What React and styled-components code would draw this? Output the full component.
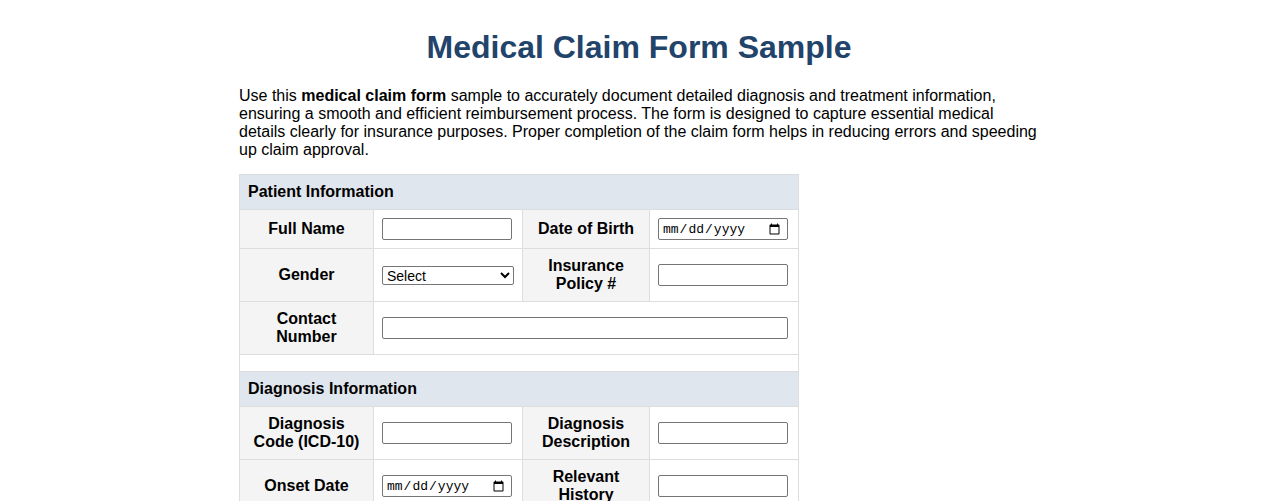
import React from 'react'
import styled, { createGlobalStyle } from 'styled-components'

const GlobalStyle = createGlobalStyle`
body {
    margin: 8px;
    background: #ffffff;
    font-family: "Liberation Sans", Arial, sans-serif;
    color: #000000;
}
`

const Page = styled.div`
max-width: 800px;
margin: 0 auto;
`

const Title = styled.h1`
margin: 21px 0;
text-align: center;
font-size: 32px;
font-weight: 700;
color: #22446b;
`

const Intro = styled.p`
margin: 0 0 15px;
font-size: 16px;
line-height: 18px;
`

const Table = styled.table`
width: 559px;
border-collapse: collapse;
table-layout: fixed;
font-size: 16px;
`

const Cell = styled.td`
border: 1px solid #dddddd;
padding: 8px;
line-height: 18px;
vertical-align: middle;
`

const Label = styled(Cell)`
background: #f4f4f4;
font-weight: 700;
text-align: center;
`

const SectionHead = styled(Cell)`
background: #e0e6ee;
font-weight: 700;
text-align: left;
`

const TextInput = styled.input`
display: block;
box-sizing: border-box;
width: calc(100% - 2px);
height: 22px;
margin: 0;
padding: 1px 2px;
border: 1px solid #767676;
border-radius: 2px;
background: #ffffff;
color: #000000;
font-family: "Liberation Sans", Arial, sans-serif;
font-size: 13px;
`

const DateInput = styled(TextInput)`
font-family: "Liberation Mono", "Courier New", monospace;
padding: 1px 4px 1px 3px;
`

const Select = styled.select`
display: block;
box-sizing: border-box;
width: 100%;
height: 19px;
margin: 0;
border: 1px solid #767676;
border-radius: 2px;
background: #ffffff;
font-family: "Liberation Sans", Arial, sans-serif;
font-size: 14px;
`

const Field = ({ label, children }) => (
    <>
        <Label>{label}</Label>
        <Cell>{children}</Cell>
    </>
)

export default function App() {
    return (
        <Page>
            <GlobalStyle />
            <Title>Medical Claim Form Sample</Title>
            <Intro>
                Use this <strong>medical claim form</strong> sample to accurately document detailed diagnosis and treatment information, ensuring a smooth and efficient reimbursement process. The form is designed to capture essential medical details clearly for insurance purposes. Proper completion of the claim form helps in reducing errors and speeding up claim approval.
            </Intro>
            <Table>
                <colgroup>
                    <col style={{ width: 134 }} />
                    <col style={{ width: 149 }} />
                    <col style={{ width: 127 }} />
                    <col style={{ width: 149 }} />
                </colgroup>
                <tbody>
                    <tr><SectionHead colSpan={4}>Patient Information</SectionHead></tr>
                    <tr>
                        <Field label='Full Name'><TextInput type='text' /></Field>
                        <Field label='Date of Birth'><DateInput type='date' /></Field>
                    </tr>
                    <tr>
                        <Field label='Gender'>
                            <Select defaultValue=''>
                                <option value=''>Select</option>
                                <option>Male</option>
                                <option>Female</option>
                                <option>Other</option>
                            </Select>
                        </Field>
                        <Field label='Insurance Policy #'><TextInput type='text' /></Field>
                    </tr>
                    <tr>
                        <Label>Contact Number</Label>
                        <Cell colSpan={3}><TextInput type='tel' /></Cell>
                    </tr>
                    <tr><Cell colSpan={4} /></tr>
                    <tr><SectionHead colSpan={4}>Diagnosis Information</SectionHead></tr>
                    <tr>
                        <Field label='Diagnosis Code (ICD-10)'><TextInput type='text' /></Field>
                        <Field label='Diagnosis Description'><TextInput type='text' /></Field>
                    </tr>
                    <tr>
                        <Field label='Onset Date'><DateInput type='date' /></Field>
                        <Field label='Relevant History'><TextInput type='text' /></Field>
                    </tr>
                </tbody>
            </Table>
        </Page>
    )
}
